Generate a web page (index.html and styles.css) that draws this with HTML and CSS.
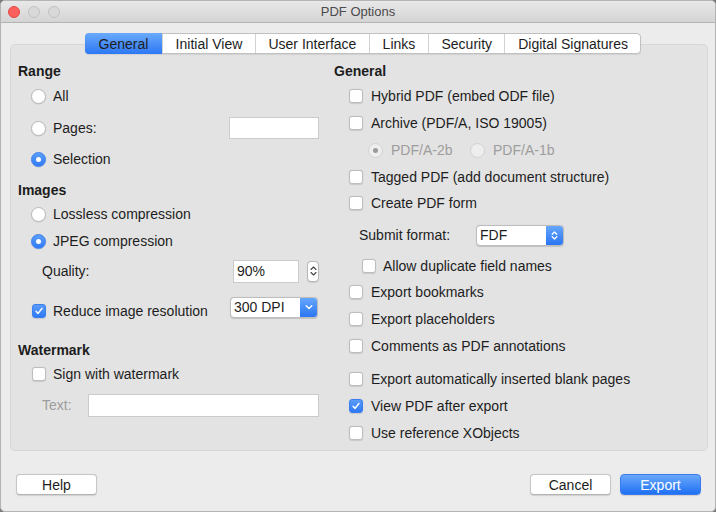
FILE: index.html
```html
<!DOCTYPE html>
<html lang="en">
<head>
<meta charset="utf-8">
<title>PDF Options</title>
<link rel="stylesheet" href="styles.css">
</head>
<body>
<div class="window">
  <div class="titlebar">
    <div class="lights"><span class="light red"></span><span class="light"></span><span class="light"></span></div>
    <div class="title">PDF Options</div>
    <div></div>
  </div>

  <div class="tabs">
    <div class="tab active">General</div>
    <div class="tab">Initial View</div>
    <div class="tab">User Interface</div>
    <div class="tab">Links</div>
    <div class="tab">Security</div>
    <div class="tab">Digital Signatures</div>
  </div>

  <div class="panel">
    <div class="col left">
      <div class="head">Range</div>
      <div class="row ind mt5"><span class="radio"></span><span class="lbl">All</span></div>
      <div class="row ind mt10 split">
        <span class="opt"><span class="radio"></span><span class="lbl">Pages:</span></span>
        <span class="field pages"></span>
      </div>
      <div class="row ind mt9"><span class="radio on"></span><span class="lbl">Selection</span></div>

      <div class="head mt9">Images</div>
      <div class="row ind mt4"><span class="radio"></span><span class="lbl">Lossless compression</span></div>
      <div class="row ind mt5"><span class="radio on"></span><span class="lbl">JPEG compression</span></div>
      <div class="row ind2 mt8 split">
        <span>Quality:</span>
        <span class="spin-group">
          <span class="field quality">90%</span>
          <span class="spin">
            <svg width="7" height="12" viewBox="0 0 7 12"><path d="M1 4.5 3.5 2 6 4.5M1 7.5 3.5 10 6 7.5" fill="none" stroke="#444" stroke-width="1.1" stroke-linecap="round" stroke-linejoin="round"/></svg>
          </span>
        </span>
      </div>
      <div class="row ind mt14 split">
        <span class="opt low"><span class="check on l"><svg width="14" height="14" viewBox="0 0 14 14"><path d="M3.6 7.4 5.9 9.8 10.4 4" fill="none" stroke="#fff" stroke-width="1.7" stroke-linecap="round" stroke-linejoin="round"/></svg></span><span class="lbl">Reduce image resolution</span></span>
        <span class="select dpi"><span class="select-text">300 DPI</span><span class="select-btn"><svg width="8" height="6" viewBox="0 0 8 6"><path d="M1.2 1.8 4 4.4 6.8 1.8" fill="none" stroke="#fff" stroke-width="1.4" stroke-linecap="round" stroke-linejoin="round"/></svg></span></span>
      </div>

      <div class="head mt21">Watermark</div>
      <div class="row ind mt4"><span class="check l"></span><span class="lbl">Sign with watermark</span></div>
      <div class="row ind2 mt9">
        <span class="muted">Text:</span>
        <span class="field wm"></span>
      </div>
    </div>

    <div class="col right">
      <div class="head">General</div>
      <div class="row rind mt5"><span class="check"></span><span class="lbl r">Hybrid PDF (embed ODF file)</span></div>
      <div class="row rind mt5"><span class="check"></span><span class="lbl r">Archive (PDF/A, ISO 19005)</span></div>
      <div class="row pdfa mt5">
        <span class="opt pdfa-first"><span class="radio dis on"></span><span class="lbl r muted">PDF/A-2b</span></span>
        <span class="opt"><span class="radio dis"></span><span class="lbl r muted">PDF/A-1b</span></span>
      </div>
      <div class="row rind mt5"><span class="check"></span><span class="lbl r">Tagged PDF (add document structure)</span></div>
      <div class="row rind mt4"><span class="check"></span><span class="lbl r">Create PDF form</span></div>
      <div class="row submit mt10">
        <span class="submit-lbl">Submit format:</span>
        <span class="select fdf"><span class="select-text">FDF</span><span class="select-btn"><svg width="7" height="11" viewBox="0 0 7 11"><path d="M1.2 4.2 3.5 2 5.8 4.2M1.2 6.8 3.5 9 5.8 6.8" fill="none" stroke="#fff" stroke-width="1.3" stroke-linecap="round" stroke-linejoin="round"/></svg></span></span>
      </div>
      <div class="row allow mt9"><span class="check"></span><span class="lbl a">Allow duplicate field names</span></div>
      <div class="row rind mt4"><span class="check"></span><span class="lbl r">Export bookmarks</span></div>
      <div class="row rind mt5"><span class="check"></span><span class="lbl r">Export placeholders</span></div>
      <div class="row rind mt5"><span class="check"></span><span class="lbl r">Comments as PDF annotations</span></div>
      <div class="row rind mt11"><span class="check"></span><span class="lbl r">Export automatically inserted blank pages</span></div>
      <div class="row rind mt5"><span class="check on"><svg width="14" height="14" viewBox="0 0 14 14"><path d="M3.6 7.4 5.9 9.8 10.4 4" fill="none" stroke="#fff" stroke-width="1.7" stroke-linecap="round" stroke-linejoin="round"/></svg></span><span class="lbl r">View PDF after export</span></div>
      <div class="row rind mt5"><span class="check"></span><span class="lbl r">Use reference XObjects</span></div>
    </div>
  </div>

  <div class="footer">
    <button class="btn">Help</button>
    <div class="spacer"></div>
    <button class="btn">Cancel</button>
    <button class="btn primary">Export</button>
  </div>
</div>
</body>
</html>
```

FILE: styles.css
```css
* { box-sizing: border-box; }

html, body {
  margin: 0;
  padding: 0;
  background: #7a7a7a;
}

body {
  font-family: "Liberation Sans", Arial, sans-serif;
  font-size: 14px;
  color: #1d1d1d;
}

.window {
  width: 716px;
  height: 512px;
  background: #ececec;
  border: 1px solid #b4b4b4;
  border-radius: 5px;
  overflow: hidden;
  display: flex;
  flex-direction: column;
}

/* title bar */
.titlebar {
  height: 22px;
  flex: none;
  display: grid;
  grid-template-columns: 1fr auto 1fr;
  align-items: center;
  background: linear-gradient(#e9e8e9, #d5d4d5);
  border-bottom: 1px solid #b3b3b3;
}

.lights {
  display: flex;
  gap: 8px;
  padding-left: 7px;
}

.light {
  width: 12px;
  height: 12px;
  border-radius: 50%;
  background: #d9d8d9;
  border: 1px solid #c4c3c4;
}

.light.red {
  background: #fc605c;
  border-color: #df4a45;
}

.title {
  font-size: 13px;
  color: #4b4b4b;
}

/* tabs */
.tabs {
  display: flex;
  align-self: flex-start;
  margin: 10px 0 -10px 84px;
  height: 21px;
  background: #fff;
  border: 1px solid #c0c0c0;
  border-radius: 4px;
  box-shadow: 0 1px 1px rgba(0, 0, 0, 0.08);
  position: relative;
  z-index: 1;
}

.tab {
  display: flex;
  align-items: center;
  padding: 0 12.4px 0 12.8px;
  border-left: 1px solid #d2d2d2;
  color: #1d1d1d;
  line-height: 1;
}

.tab:first-child {
  border-left: none;
}

.tab.active {
  background: linear-gradient(#6aa9fb, #2d78f4);
  padding: 0 13.5px;
  margin: -1px 0 -1px -1px;
  border-radius: 4px 0 0 4px;
}

/* panel */
.panel {
  margin: 0 7px 0 9px;
  height: 407px;
  flex: none;
  background: #e3e3e3;
  border: 1px solid #d7d7d7;
  border-radius: 5px;
  padding: 15px 0 0 7px;
  display: grid;
  grid-template-columns: 301px 1fr;
  column-gap: 15px;
  align-items: start;
}

.col {
  display: flex;
  flex-direction: column;
}

.head {
  height: 20px;
  display: flex;
  align-items: center;
  font-weight: bold;
  padding-top: 2px;
}

.row {
  height: 22px;
  display: flex;
  align-items: center;
}

.mt4 { margin-top: 4px; }
.mt5 { margin-top: 5px; }
.mt8 { margin-top: 8px; }
.mt9 { margin-top: 9px; }
.mt10 { margin-top: 10px; }
.mt11 { margin-top: 11px; }
.mt14 { margin-top: 14px; }
.mt21 { margin-top: 21px; }

.split { justify-content: space-between; }

.ind { padding-left: 13px; }
.ind2 { padding-left: 24px; }
.rind { padding-left: 15px; }

.opt {
  display: flex;
  align-items: center;
}

.opt.low { margin-top: 8px; }

.lbl { margin-left: 7px; }
.lbl.r { margin-left: 8px; }
.lbl.a { margin-left: 7px; }

.muted { color: #9d9d9d; }

/* radio buttons */
.radio {
  width: 15px;
  height: 15px;
  flex: none;
  border-radius: 50%;
  background: #fff;
  border: 1px solid #b9b9b9;
  box-shadow: 0 0.5px 1px rgba(0, 0, 0, 0.12);
  display: flex;
  align-items: center;
  justify-content: center;
}

.radio.on {
  background: linear-gradient(#5d9ff9, #3079f5);
  border-color: #3a7ef0;
}

.radio.on::after {
  content: "";
  width: 5px;
  height: 5px;
  border-radius: 50%;
  background: #fff;
}

.radio.dis {
  background: #eeeeee;
  border-color: #d2d2d2;
  box-shadow: none;
}

.radio.dis.on::after {
  background: #9a9a9a;
}

/* check boxes */
.check {
  width: 14px;
  height: 14px;
  flex: none;
  border-radius: 3px;
  background: #fff;
  border: 1px solid #bdbdbd;
  box-shadow: 0 0.5px 1px rgba(0, 0, 0, 0.12);
  display: flex;
  align-items: center;
  justify-content: center;
}

.check.l { margin-left: 1px; }

.check.on {
  background: linear-gradient(#5a9cf9, #2f78f5);
  border-color: #3a7ef0;
}

.check svg { display: block; }

/* text fields */
.field {
  height: 22px;
  background: #fff;
  border: 1px solid #cbcbcb;
  display: flex;
  align-items: center;
  padding-left: 3px;
}

.field.pages { width: 90px; }
.field.quality { width: 66px; height: 23px; }
.field.wm { flex: 1; margin-left: 16px; height: 23px; }

.spin-group {
  display: flex;
  align-items: center;
  gap: 8px;
}

.spin {
  width: 12px;
  height: 21px;
  background: #fff;
  border: 1px solid #b7b7b7;
  border-radius: 4px;
  display: flex;
  align-items: center;
  justify-content: center;
  box-shadow: 0 0.5px 1px rgba(0, 0, 0, 0.1);
}

/* popup selects */
.select {
  height: 21px;
  display: flex;
  background: #fff;
  border: 1px solid #bdbdbd;
  border-radius: 4px;
  overflow: hidden;
  box-shadow: 0 0.5px 1px rgba(0, 0, 0, 0.15);
}

.select.dpi { width: 88px; margin-right: 1px; }
.select.fdf { width: 88px; }

.select-text {
  flex: 1;
  display: flex;
  align-items: center;
  padding-left: 3px;
}

.select-btn {
  width: 17px;
  display: flex;
  align-items: center;
  justify-content: center;
  background: linear-gradient(#66a6fb, #2a76f4);
}

.pdfa { padding-left: 34px; }
.pdfa-first { width: 102px; }

.submit { padding-left: 25px; }
.submit-lbl { width: 117px; }

.allow { padding-left: 28px; }

/* footer */
.footer {
  display: flex;
  align-items: center;
  margin-top: 23px;
  padding: 0 14px 0 15px;
  gap: 9px;
}

.spacer { flex: 1; }

.btn {
  width: 81px;
  height: 21px;
  font-family: "Liberation Sans", Arial, sans-serif;
  font-size: 14px;
  color: #1d1d1d;
  background: #fff;
  border: 1px solid #c6c6c6;
  border-bottom-color: #b3b3b3;
  border-radius: 4px;
  box-shadow: 0 0.5px 1px rgba(0, 0, 0, 0.12);
  padding: 0;
}

.btn.primary {
  background: linear-gradient(#69a8fb, #1f70f4);
  border-color: #3a7cf0;
  color: #fff;
}
```
